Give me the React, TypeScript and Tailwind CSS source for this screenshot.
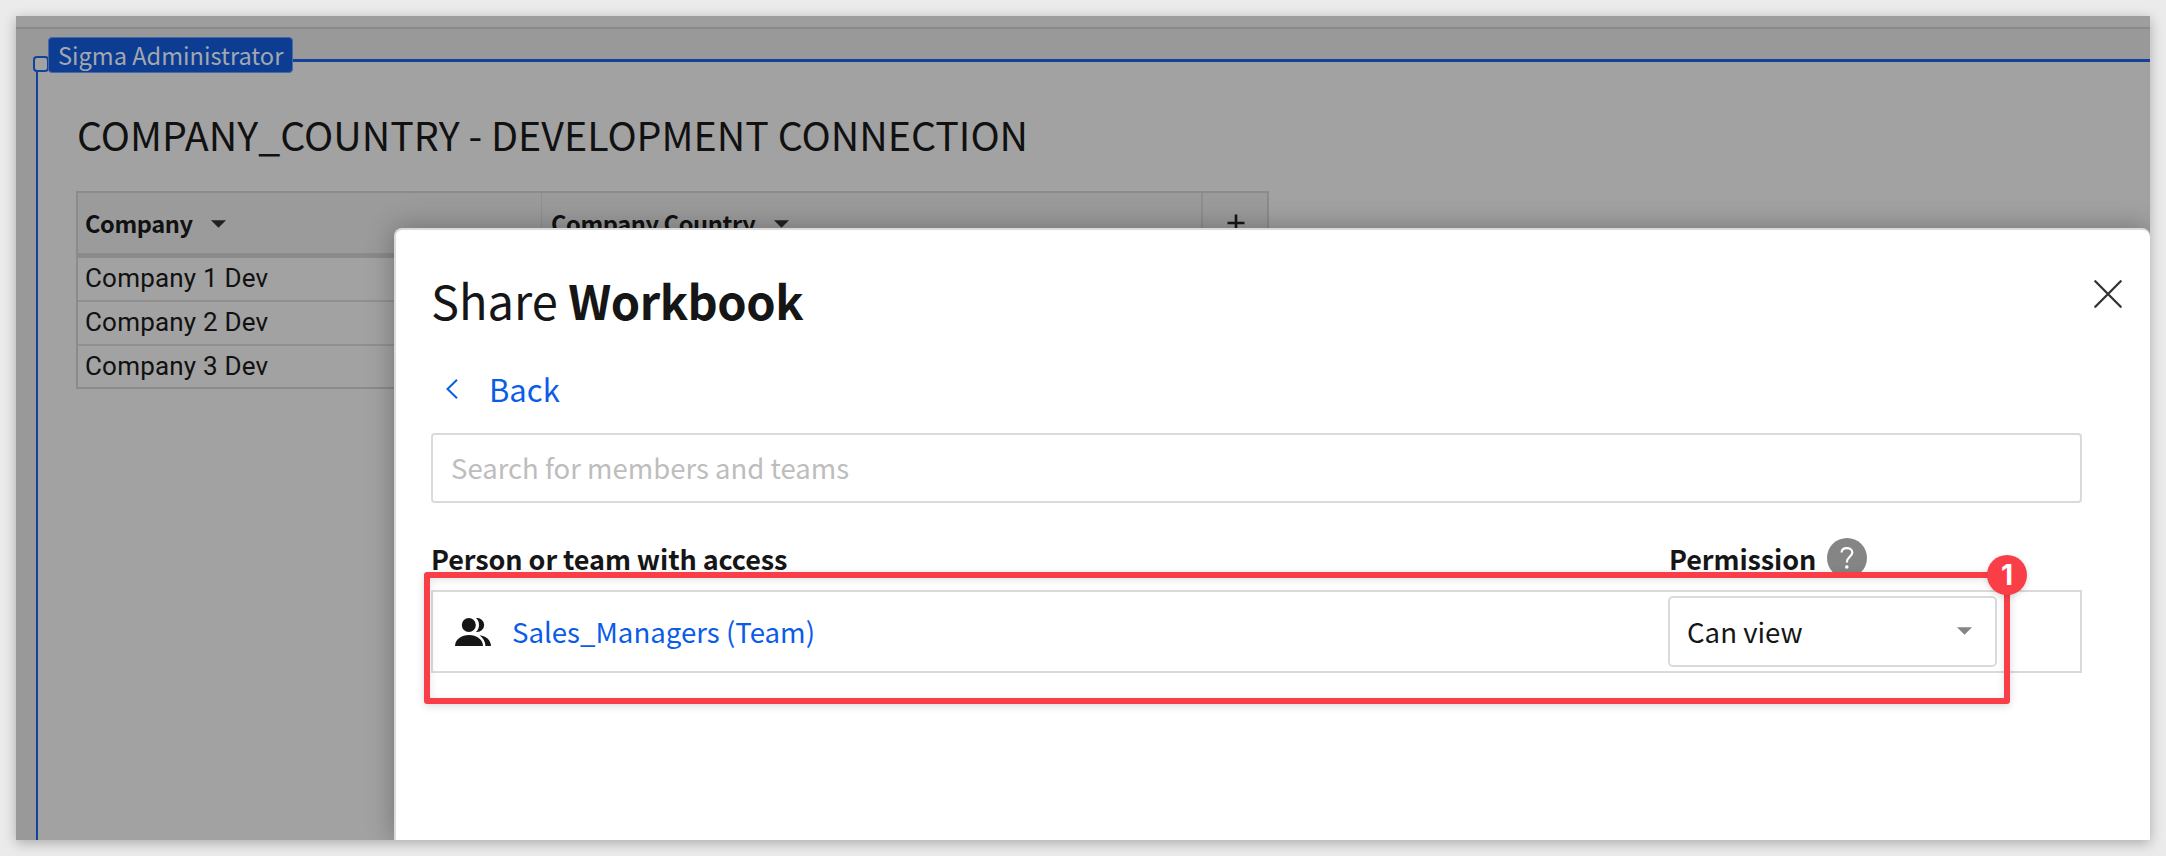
import React from "react";

const SANS = "font-['Noto_Sans_CJK_SC','Noto_Sans',sans-serif]";

function Caret({ className }: { className: string }) {
  return (
    <svg viewBox="0 0 15 8" className={`h-2 w-[15px] shrink-0 ${className}`} fill="currentColor">
      <path d="M0 0.3h15L7.5 7.8z" />
    </svg>
  );
}

function SheetTable() {
  const rows = ["Company 1 Dev", "Company 2 Dev", "Company 3 Dev"];
  return (
    <div className="mt-[27px] w-[1193px] border-2 border-[#8b8b8b]">
      <div className="flex h-[65px] border-b-[5px] border-[#8a8a8a] bg-[#9b9b9b] text-[23.6px] leading-[60px] font-bold tracking-[-0.4px] text-[#111]">
        <div className="flex w-[464px] items-center border-r border-[#8f8f8f] pl-[7px]">
          <span className="w-[126px] whitespace-nowrap">Company</span>
          <Caret className="mt-[2px] text-[#222]" />
        </div>
        <div className="flex w-[661px] items-center border-r-2 border-[#8f8f8f] pl-[9px]">
          <span className="w-[223px] whitespace-nowrap">Company Country</span>
          <Caret className="mt-[2px] text-[#222]" />
        </div>
        <div className="flex flex-1 items-center justify-center pl-[2px]">
          <svg viewBox="0 0 18 18" className="h-[18px] w-[18px]" stroke="#161616" strokeWidth="2.6">
            <path d="M9 0.5v17M0.5 9h17" />
          </svg>
        </div>
      </div>
      {rows.map((row, i) => (
        <div
          key={row}
          className={`flex items-center pl-[7px] font-['Roboto',sans-serif] text-[26px] tracking-[0.2px] text-[#111] ${
            i < 2 ? "h-[44px] border-b-2 border-[#909090] pb-[2px] leading-[40px]" : "h-[41px] leading-[41px]"
          }`}
        >
          {row}
        </div>
      ))}
    </div>
  );
}

function Workbook() {
  return (
    <div className="flex h-full flex-col bg-[#999]">
      <div className="h-[13px] shrink-0 border-b-2 border-[#8a8a8a] bg-[#9e9e9e]" />
      <div className="flex-1 pt-[30px] pl-5">
        <div className="relative h-full border-t-[3px] border-l-2 border-[#124299] bg-[#a2a2a2] pt-[42px] pl-[39px]">
          <div className="absolute -top-[6px] -left-[5px] h-4 w-4 rounded-[4px] border-2 border-[#124299] bg-[#a2a2a2]" />
          <div className="absolute -top-[25px] left-[10px] flex h-[36px] w-[245px] items-center rounded-[4px] border border-[#4468a8] bg-[#0d3d92] pl-[9px] text-[23.6px] leading-[34px] whitespace-nowrap text-[#a3a7b0]">
            Sigma Administrator
          </div>
          <h1 className="h-[60px] text-[39.4px] leading-[60px] whitespace-nowrap text-[#111]">
            COMPANY_COUNTRY - DEVELOPMENT CONNECTION
          </h1>
          <div className="-ml-px">
            <SheetTable />
          </div>
        </div>
      </div>
    </div>
  );
}

function PeopleIcon() {
  return (
    <svg viewBox="0 0 36 28" className="h-7 w-9 shrink-0" fill="#161616">
      <circle cx="13.8" cy="7" r="7" />
      <path d="M0 28C0.3 21 6.5 17 14 17s13.700 4 14 11z" />
      <path d="M21 0.100A7 7 0 1 1 21 13.900C25 10.500 25 3.500 21 0.100z" />
      <path d="M24.500 17.200C31.500 18 35.800 22 36 28h-5.500c-0.300-4.500-2.300-8.200-6-10.800z" />
    </svg>
  );
}

function ShareDialog() {
  return (
    <div className="absolute top-[212px] right-0 bottom-0 left-[378px] rounded-t-[8px] border-t-2 border-l-2 border-[#dadada] bg-white pr-[68px] pl-[35px] text-[#161616] shadow-[0_0_28px_rgba(0,0,0,0.3)]">
      <div className="flex justify-between pt-[34px]">
        <h2 className="h-[72px] text-[47px] leading-[72px] whitespace-nowrap">
          Share <b className="font-bold tracking-[-0.5px]">Workbook</b>
        </h2>
        <svg viewBox="0 0 28 28" className="mt-4 -mr-[40px] h-7 w-7" stroke="#333" strokeWidth="2.300" strokeLinecap="round">
          <path d="M1.300 1.300L26.700 26.700M26.700 1.300L1.300 26.700" />
        </svg>
      </div>
      <div className="mt-[30px] flex h-[46px] items-center pl-[15px] text-[31px] leading-[46px] text-[#0b5ce8]">
        <svg viewBox="0 0 12 20" className="h-5 w-3" fill="none" stroke="currentColor" strokeWidth="2">
          <path d="M11 0.800L1.500 10L11 19.200" />
        </svg>
        <span className="ml-[31px]">Back</span>
      </div>
      <div className="mt-[21px] flex h-[70px] items-center rounded-[4px] border-2 border-[#dadada] pl-[18px] text-[27.5px] leading-[66px] text-[#bdbdbd]">
        <span className="-mt-[3px]">Search for members and teams</span>
      </div>
      <div className="relative mt-[34px]">
        <div className="flex h-[53px] text-[27px] leading-[44px] font-bold tracking-[-0.1px] whitespace-nowrap">
          <span className="w-[1238px]">Person or team with access</span>
          <span className="w-[158px]">Permission</span>
          <span className="mt-[1px] flex h-10 w-10 justify-center rounded-full bg-[#858585]">
            <svg viewBox="0 0 14 22" className="mt-[9px] h-[22px] w-[14px]" fill="none" stroke="white" strokeWidth="2.200">
              <path d="M1.500 5.500C1.800 2.500 4 1.200 6.800 1.200C10 1.200 12.300 2.800 12.300 5.600C12.300 9.500 6.800 9.800 6.800 15.500" />
              <circle cx="6.800" cy="20" r="1" fill="white" strokeWidth="1.600" />
            </svg>
          </span>
        </div>
        <div className="flex h-[83px] items-center border-2 border-[#dadada] pl-[22px] text-[27.6px] leading-[60px] whitespace-nowrap">
          <PeopleIcon />
          <span className="-mt-[2px] ml-[21px] w-[1156px] text-[#0b5ce8]">Sales_Managers (Team)</span>
          <div className="flex h-[71px] w-[329px] items-center justify-between rounded-[5px] border-2 border-[#dadada] pr-[23px] pl-[17px]">
            <span className="-mt-[2px]">Can view</span>
            <Caret className="-mt-[2px] text-[#858585]" />
          </div>
        </div>
        <div className="absolute top-[35px] -left-[7px] h-[132px] w-[1586px] rounded-[3px] border-[6px] border-[#f93e48] shadow-[0_2px_8px_rgba(0,0,0,0.15),inset_0_2px_8px_rgba(0,0,0,0.1)]">
          <div className="absolute -top-[23px] -right-[23px] flex h-10 w-10 items-center justify-center rounded-full bg-[#f93e48] font-['Inter',sans-serif] text-[28px] leading-10 font-bold text-white shadow-[0_2px_6px_rgba(0,0,0,0.15)]">
            1
          </div>
        </div>
      </div>
    </div>
  );
}

export default function App() {
  return (
    <div className={`h-[856px] w-[2166px] bg-[#ebebeb] p-4 ${SANS}`}>
      <div className="h-full shadow-[0_3px_12px_rgba(0,0,0,0.28)]">
        <div className="relative h-full overflow-hidden">
          <Workbook />
          <ShareDialog />
        </div>
      </div>
    </div>
  );
}
